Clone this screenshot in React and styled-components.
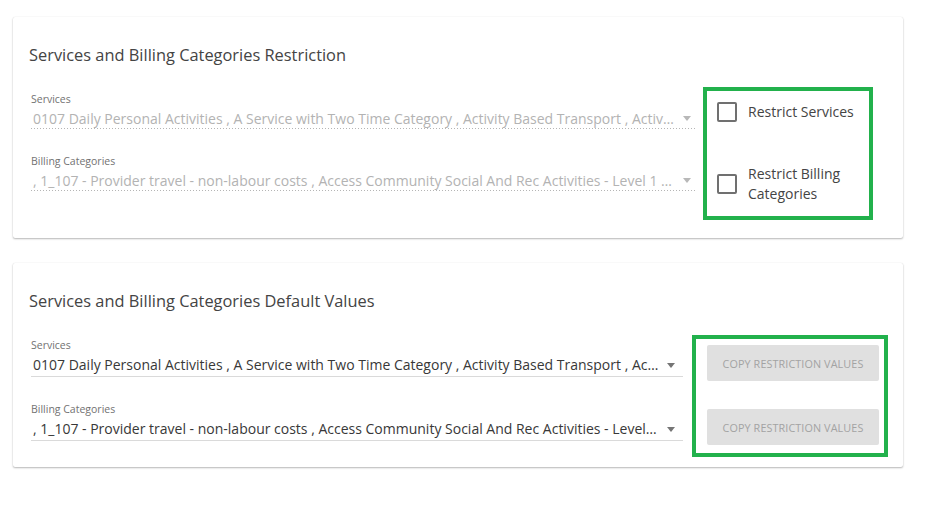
import React from "react";
import styled, { createGlobalStyle } from "styled-components";

const Global = createGlobalStyle`
  html, body { margin: 0; padding: 0; background: #fff; }
  body { font-family: "Open Sans", "Noto Sans", Arial, sans-serif; color: #333; }
  * { box-sizing: border-box; }
`;

const Page = styled.div`
  display: flex;
  flex-direction: column;
  gap: 25px;
  padding: 17px 0 20px 13px;
`;

const Card = styled.section`
  width: 890px;
  background: #fff;
  box-shadow: 0 1px 2px rgba(0,0,0,0.28), 0 0 1px rgba(0,0,0,0.12);
  border-radius: 2px;
  padding: 27px 0 ${(p) => p.$bottom}px 16px;
`;

const Title = styled.h2`
  margin: 0;
  font-size: 16.4px;
  line-height: 22px;
  font-weight: 400;
  color: #444;
`;

const Row = styled.div`
  display: flex;
  align-items: flex-start;
  gap: ${(p) => p.$gap}px;
  margin-top: ${(p) => p.$top}px;
`;

const Fields = styled.div`
  width: ${(p) => p.$width}px;
  margin-left: 2px;
  padding-top: ${(p) => p.$pad}px;
  display: flex;
  flex-direction: column;
  gap: 25px;
`;

const Field = styled.div`
  display: flex;
  flex-direction: column;
`;

const Label = styled.label`
  font-size: 10.5px;
  line-height: 14px;
  color: #727272;
`;

const Select = styled.div`
  display: flex;
  align-items: center;
  margin-top: 3px;
  padding: 0 0 1px 2px;
  ${(p) =>
    p.$disabled
      ? `background-image: linear-gradient(to right, #b5b5b5 34%, transparent 0%);
         background-size: 3px 1px;
         background-repeat: repeat-x;
         background-position: left bottom;`
      : `border-bottom: 1px solid #dadada;`}
`;

const Value = styled.span`
  flex: 1;
  min-width: 0;
  font-size: 14px;
  line-height: ${(p) => (p.$disabled ? 19 : 20)}px;
  color: ${(p) => (p.$disabled ? "#b3b3b3" : "#383838")};
  white-space: nowrap;
  overflow: hidden;
  text-overflow: ellipsis;
  padding-right: 8px;
`;

const Arrow = styled.span`
  width: 0;
  height: 0;
  border-left: 4.5px solid transparent;
  border-right: 4.5px solid transparent;
  border-top: 5px solid ${(p) => (p.$disabled ? "#b8b8b8" : "#757575")};
  margin-right: ${(p) => p.$mr}px;
  flex-shrink: 0;
`;

const Highlight = styled.div`
  border: 4px solid #22b14c;
  width: ${(p) => p.$width}px;
  padding: ${(p) => p.$padding};
  display: flex;
  flex-direction: column;
  gap: ${(p) => p.$gap}px;
`;

const CheckRow = styled.label`
  display: flex;
  align-items: center;
  gap: 11px;
`;

const Box = styled.span`
  width: 20px;
  height: 20px;
  border: 2px solid #707070;
  border-radius: 2px;
  flex-shrink: 0;
`;

const CheckText = styled.span`
  font-size: 14px;
  line-height: 19.5px;
  color: #444;
  width: 110px;
`;

const CopyButton = styled.button`
  width: 172px;
  height: 36px;
  border: none;
  border-radius: 2px;
  background: #e0e0e0;
  color: #a3a3a3;
  font-family: "Open Sans", "Noto Sans", Arial, sans-serif;
  font-size: 10.8px;
  text-transform: uppercase;
  letter-spacing: 0.1px;
  padding: 0;
  cursor: default;
`;

const SERVICES =
  "0107 Daily Personal Activities , A Service with Two Time Category , Activity Based Transport , Activities of Daily Living , Assistance with Self-Care";
const BILLING =
  ", 1_107 - Provider travel - non-labour costs , Access Community Social And Rec Activities - Level 1 - Standard , Assist Personal Activities";

function SelectField({ label, value, disabled, mr }) {
  return (
    <Field>
      <Label>{label}</Label>
      <Select $disabled={disabled}>
        <Value $disabled={disabled}>{value}</Value>
        <Arrow $disabled={disabled} $mr={mr} />
      </Select>
    </Field>
  );
}

export default function App() {
  return (
    <>
      <Global />
      <Page>
        <Card $bottom={18}>
          <Title>Services and Billing Categories Restriction</Title>
          <Row $top={21} $gap={7}>
            <Fields $width={665} $pad={5}>
              <SelectField label="Services" value={SERVICES} disabled mr={5} />
              <SelectField label="Billing Categories" value={BILLING} disabled mr={5} />
            </Fields>
            <Highlight $width={170} $padding="11px 4px 13px 10px" $gap={42}>
              <CheckRow>
                <Box />
                <CheckText>Restrict Services</CheckText>
              </CheckRow>
              <CheckRow>
                <Box />
                <CheckText>Restrict Billing Categories</CheckText>
              </CheckRow>
            </Highlight>
          </Row>
        </Card>
        <Card $bottom={10}>
          <Title>Services and Billing Categories Default Values</Title>
          <Row $top={23} $gap={9}>
            <Fields $width={652} $pad={3}>
              <SelectField label="Services" value={SERVICES} mr={8} />
              <SelectField label="Billing Categories" value={BILLING} mr={8} />
            </Fields>
            <Highlight $width={196} $padding="6px 5px 8px 11px" $gap={28}>
              <CopyButton type="button">Copy restriction values</CopyButton>
              <CopyButton type="button">Copy restriction values</CopyButton>
            </Highlight>
          </Row>
        </Card>
      </Page>
    </>
  );
}
